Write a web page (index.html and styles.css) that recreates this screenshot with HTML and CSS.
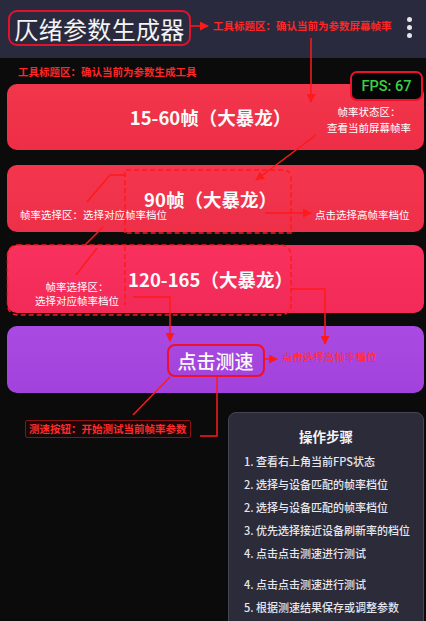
FILE: index.html
```html
<!DOCTYPE html>
<html lang="zh">
<head>
<meta charset="utf-8">
<title>仄绪参数生成器</title>
<link rel="stylesheet" href="styles.css">
</head>
<body>
<div class="page">
  <header class="topbar">
    <div class="title-box">仄绪参数生成器</div>
    <span class="top-note">工具标题区：确认当前为参数屏幕帧率</span>
    <div class="menu"><i></i><i></i><i></i></div>
  </header>

  <main class="main">
    <div class="note-row"><span class="red-note">工具标题区：确认当前为参数生成工具</span></div>
    <div class="fps">FPS: 67</div>

    <section class="cards">
      <div class="card c1">
        <span class="card-title">15-60帧（大暴龙）</span>
        <div class="ann ann-status">帧率状态区：<br>查看当前屏幕帧率</div>
      </div>
      <div class="card c2">
        <span class="card-title">90帧（大暴龙）</span>
        <div class="ann ann-sel1">帧率选择区：选择对应帧率档位</div>
        <div class="ann ann-high">点击选择高帧率档位</div>
      </div>
      <div class="card c3">
        <span class="card-title">120-165（大暴龙）</span>
        <div class="ann ann-sel2">帧率选择区：<br>选择对应帧率档位</div>
      </div>
      <div class="card c4">
        <span class="speed-btn">点击测速</span>
        <div class="ann ann-red">点击选择高帧率档位</div>
      </div>
    </section>

    <div class="bottom">
      <div class="speed-label">测速按钮：开始测试当前帧率参数</div>
      <div class="steps">
        <h2 class="steps-title">操作步骤</h2>
        <ol class="steps-list">
          <li>1. 查看右上角当前FPS状态</li>
          <li>2. 选择与设备匹配的帧率档位</li>
          <li>2. 选择与设备匹配的帧率档位</li>
          <li>3. 优先选择接近设备刷新率的档位</li>
          <li>4. 点击点击测速进行测试</li>
          <li class="gap">4. 点击点击测速进行测试</li>
          <li>5. 根据测速结果保存或调整参数</li>
        </ol>
      </div>
    </div>
  </main>

  <svg class="wires" width="426" height="621" viewBox="0 0 426 621" xmlns="http://www.w3.org/2000/svg">
    <defs>
      <marker id="ah" viewBox="0 0 10 10" refX="9" refY="5" markerWidth="6" markerHeight="6" orient="auto-start-reverse">
        <path d="M0 0 L10 5 L0 10 z" fill="#ff1a1a"/>
      </marker>
    </defs>
    <g fill="none" stroke="#ff1a1a" stroke-width="1.5">
      <path d="M191 26 H208" marker-end="url(#ah)"/>
      <path d="M311 38 V102" marker-end="url(#ah)"/>
      <path d="M316 135 L256 180" marker-end="url(#ah)"/>
      <path d="M87 202 L110 175 H125"/>
      <path d="M103 227 L84 246"/>
      <path d="M97 248 L76 275"/>
      <path d="M265 213 H311" marker-end="url(#ah)"/>
      <path d="M133 297 H170 V341" marker-end="url(#ah)"/>
      <path d="M291 289 H325 V344" marker-end="url(#ah)"/>
      <path d="M170 377 L133 415"/>
      <path d="M217 377 V436 H200"/>
      <path d="M265 359 H277" marker-end="url(#ah)"/>
    </g>
    <g fill="none" stroke="#ff1a1a" stroke-width="1.5" stroke-dasharray="5 3">
      <path d="M125 233 V170 H283 Q291 170 291 178 V233 H125"/>
      <rect x="7.5" y="245" width="283.5" height="70" rx="10"/>
      <path d="M125 246 V305"/>
    </g>
  </svg>
</div>
</body>
</html>
```

FILE: styles.css
```css
* { box-sizing: border-box; }

html, body {
  margin: 0;
  padding: 0;
  background: #0b0b0c;
}

body {
  font-family: "Noto Sans CJK SC", "Noto Sans", sans-serif;
  color: #fff;
  width: 426px;
  height: 621px;
  overflow: hidden;
}

.page {
  position: relative;
  width: 426px;
  height: 621px;
}

/* header */
.topbar {
  height: 58px;
  background: #2a2a3e;
  display: flex;
  align-items: center;
  padding-left: 8px;
}

.title-box {
  width: 183px;
  height: 36px;
  border: 2px solid #e3122c;
  border-radius: 9px;
  display: flex;
  align-items: center;
  justify-content: center;
  font-size: 24px;
  letter-spacing: 0.3px;
  color: #f4f4f6;
  margin-top: -2px;
}

.top-note {
  align-self: flex-start;
  margin-top: 18px;
  margin-left: 22px;
  font-size: 10.5px;
  line-height: 16px;
  font-weight: 700;
  color: #ff2626;
}

.menu {
  margin-left: auto;
  margin-right: 14px;
  display: flex;
  flex-direction: column;
  gap: 3px;
  margin-top: -4px;
}

.menu i {
  display: block;
  width: 5px;
  height: 5px;
  border-radius: 50%;
  background: #e6e6ea;
}

/* main */
.main {
  position: relative;
  padding: 0 2px 0 7px;
}

.note-row {
  height: 26px;
  display: flex;
  align-items: center;
  padding-left: 11px;
}

.red-note {
  font-size: 10.5px;
  font-weight: 700;
  color: #ff2626;
}

.fps {
  position: absolute;
  left: 350px;
  top: 13px;
  width: 73px;
  height: 30px;
  background: #050505;
  border: 2px solid #f0102a;
  border-radius: 7px;
  display: flex;
  align-items: center;
  justify-content: center;
  color: #3fcf45;
  font-family: Roboto, "Noto Sans", sans-serif;
  font-weight: 500;
  font-size: 14.5px;
  z-index: 2;
}

.cards {
  display: flex;
  flex-direction: column;
  gap: 13px;
}

.card {
  position: relative;
  height: 67px;
  border-radius: 10px;
  display: flex;
  align-items: center;
  justify-content: center;
  padding-right: 10px;
}

.c1 { height: 66px; background: linear-gradient(180deg, #f2364c, #ee2e46); }
.c2 { background: linear-gradient(180deg, #f3364e, #ee2f49); margin-top: 2px; }
.c3 { height: 68px; background: linear-gradient(180deg, #f8315f, #f22a58); }
.c4 { background: linear-gradient(180deg, #a94ae2, #a242dc); padding-right: 0; }

.card-title {
  font-size: 18.5px;
  font-weight: 700;
  color: #fbfbfb;
}

.ann {
  position: absolute;
  font-size: 10.5px;
  line-height: 16px;
  color: #fff;
  white-space: nowrap;
}

.ann-status { right: 13px; top: 20px; text-align: center; }
.ann-sel1 { left: 13px; top: 42px; }
.ann-high { left: 308px; top: 42px; }
.ann-sel2 { left: 22px; top: 35px; width: 96px; text-align: center; line-height: 14px; }
.ann-red { left: 275px; top: 23px; color: #ff2e3e; font-weight: 500; }

.speed-btn {
  width: 98px;
  height: 33px;
  border: 2px solid #f0102a;
  border-radius: 8px;
  display: flex;
  align-items: center;
  justify-content: center;
  font-size: 19px;
  font-weight: 500;
  color: #fafafa;
  margin-top: 1px;
}

/* bottom */
.bottom {
  display: flex;
  align-items: flex-start;
  margin-top: 19px;
}

.speed-label {
  margin-left: 18px;
  margin-top: 8px;
  height: 18px;
  padding: 0 3px;
  border: 1px solid #8a1212;
  border-radius: 2px;
  background: #1a0808;
  font-size: 10.5px;
  line-height: 16px;
  font-weight: 700;
  color: #ff2a2a;
}

.steps {
  margin-left: auto;
  width: 196px;
  height: 230px;
  background: #2b2b39;
  border: 1px solid #45454f;
  border-radius: 8px;
  padding: 13px 0 0 15px;
}

.steps-title {
  margin: 0;
  font-size: 13.5px;
  line-height: 20px;
  font-weight: 700;
  text-align: center;
  padding-right: 15px;
  color: #f4f4f6;
}

.steps-list {
  list-style: none;
  margin: 4px 0 0 0;
  padding: 0;
}

.steps-list li {
  font-size: 11px;
  line-height: 23px;
  font-weight: 500;
  color: #e6e6ec;
  white-space: nowrap;
}

.steps-list li.gap { margin-top: 8px; }

/* connector overlay */
.wires {
  position: absolute;
  left: 0;
  top: 0;
  pointer-events: none;
  z-index: 3;
}
```
